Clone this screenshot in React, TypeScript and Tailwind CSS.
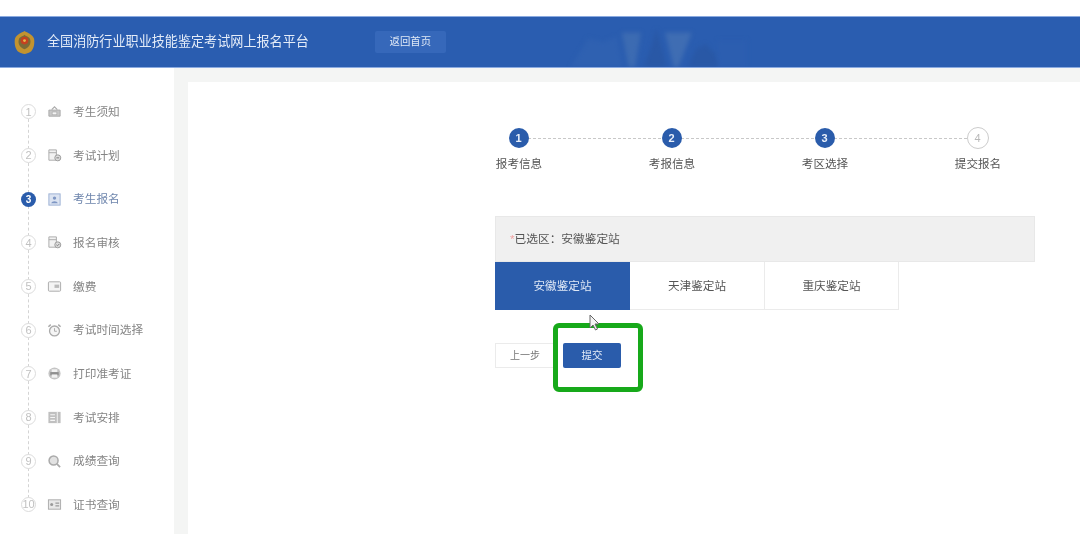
import React from "react";

const font = { fontFamily: '"Liberation Sans", "Noto Sans CJK SC", sans-serif' };

const icons: Record<string, React.ReactNode> = {
  notice: (
    <>
      <path d="M2 6.5h12v6.5H2z" fill="#c8c8c8" stroke="#aaa" />
      <path d="M5 6l3-3 3 3" fill="none" stroke="#aaa" strokeWidth="1.2" />
      <rect x="5.5" y="8.5" width="5" height="3" fill="#f4f4f4" stroke="#aaa" strokeWidth=".7" />
    </>
  ),
  plan: (
    <>
      <path d="M2 2h8v11H2z" fill="#f2f2f2" stroke="#aaa" />
      <path d="M2 5h8" stroke="#aaa" />
      <circle cx="11.5" cy="10.5" r="3.2" fill="#ddd" stroke="#999" />
      <path d="M10 10.5h3" stroke="#777" />
    </>
  ),
  apply: (
    <>
      <rect x="2" y="2" width="12" height="12" fill="#dbe3f1" stroke="#9db0d3" />
      <circle cx="8" cy="6.5" r="1.8" fill="#7f97c4" />
      <path d="M4.5 12c.5-3 6.5-3 7 0z" fill="#7f97c4" />
    </>
  ),
  audit: (
    <>
      <path d="M2 2h8v11H2z" fill="#f2f2f2" stroke="#aaa" />
      <path d="M2 5h8" stroke="#aaa" />
      <circle cx="11.5" cy="10.5" r="3.2" fill="#ddd" stroke="#999" />
      <path d="M10 10.5l1.2 1 2-2" fill="none" stroke="#777" />
    </>
  ),
  pay: (
    <>
      <rect x="1.5" y="3" width="13" height="10" rx="1" fill="#f4f4f4" stroke="#aaa" />
      <rect x="8" y="6" width="5" height="3.5" fill="#bbb" />
    </>
  ),
  clock: (
    <>
      <circle cx="8" cy="8.5" r="5.3" fill="#f5f5f5" stroke="#aaa" strokeWidth="1.4" />
      <path d="M8 5.5v3.3h2.5" fill="none" stroke="#aaa" />
      <path d="M1.5 4l2.5-2.3M14.5 4L12 1.7" stroke="#aaa" strokeWidth="1.6" />
    </>
  ),
  print: (
    <>
      <circle cx="8" cy="8" r="6.5" fill="#c4c4c4" />
      <rect x="5" y="3.5" width="6" height="3" fill="#f2f2f2" />
      <rect x="3.5" y="6.5" width="9" height="3.5" fill="#8f8f8f" />
      <rect x="5" y="9" width="6" height="3.5" fill="#f2f2f2" />
    </>
  ),
  arrange: (
    <>
      <rect x="1.5" y="2" width="13" height="12" fill="#c0c0c0" />
      <path d="M3.5 5h5M3.5 8h5M3.5 11h5" stroke="#f5f5f5" strokeWidth="1.2" />
      <path d="M11 2v12" stroke="#f5f5f5" />
    </>
  ),
  search: (
    <>
      <circle cx="7" cy="7" r="4.8" fill="#e2e2e2" stroke="#aaa" strokeWidth="1.6" />
      <path d="M10.5 10.5l3.5 3.5" stroke="#aaa" strokeWidth="1.8" />
    </>
  ),
  cert: (
    <>
      <rect x="1.5" y="3" width="13" height="10" fill="#e8e8e8" stroke="#aaa" />
      <circle cx="5" cy="8" r="1.6" fill="#999" />
      <path d="M9 6.5h4M9 9.5h4" stroke="#999" strokeWidth="1.2" />
    </>
  ),
};

const nav = [
  ["考生须知", "notice"],
  ["考试计划", "plan"],
  ["考生报名", "apply"],
  ["报名审核", "audit"],
  ["缴费", "pay"],
  ["考试时间选择", "clock"],
  ["打印准考证", "print"],
  ["考试安排", "arrange"],
  ["成绩查询", "search"],
  ["证书查询", "cert"],
];

function NavRow({ label, icon, index }: { label: string; icon: string; index: number }) {
  const active = index === 2;
  return (
    <div className="relative flex h-[43.67px] items-center pl-[21px]">
      {index < 9 && (
        <div className="absolute left-[28px] top-[29px] h-[30px] border-l border-dashed border-[#d4d4d4]" />
      )}
      <div
        className={
          active
            ? "relative flex h-[15px] w-[15px] items-center justify-center rounded-full bg-[#2a5cab] text-[10px] font-bold text-white"
            : "relative flex h-[15px] w-[15px] items-center justify-center rounded-full border border-[#dcdcdc] bg-white text-[11px] text-[#c0c0c0]"
        }
      >
        {index + 1}
      </div>
      <svg viewBox="0 0 16 16" className="ml-[11px] h-[15px] w-[15px] shrink-0">
        {icons[icon]}
      </svg>
      <span className={active ? "ml-[11px] text-[11.7px] text-[#6f86ad]" : "ml-[11px] text-[11.7px] text-[#858585]"}>
        {label}
      </span>
    </div>
  );
}

const steps = ["报考信息", "考报信息", "考区选择", "提交报名"];

function Step({ label, index }: { label: string; index: number }) {
  const done = index < 3;
  return (
    <div className="relative flex w-[153px] flex-col items-center">
      {index < 3 && (
        <div className="absolute left-[76px] top-[10px] w-[153px] border-t border-dashed border-[#c8c8c8]" />
      )}
      <div
        className={
          done
            ? "relative flex h-[20px] w-[20px] items-center justify-center rounded-full bg-[#2a5cab] text-[11px] font-semibold text-[#e8effa]"
            : "relative -my-[1px] flex h-[22px] w-[22px] items-center justify-center rounded-full border border-[#cccccc] bg-white text-[11px] text-[#b8b8b8]"
        }
      >
        {index + 1}
      </div>
      <div className="ml-[1px] mt-[7px] text-[11.6px] leading-[18px] text-[#555]">{label}</div>
    </div>
  );
}

export default function App() {
  return (
    <div className="h-[534px] w-[1080px] overflow-hidden bg-white blur-[0.35px]" style={font}>
      <div className="h-[16px] bg-white" />
      <header className="relative flex h-[52px] items-center overflow-hidden border-y border-y-[#8aaae0] bg-[#2a5db0] pl-[13px]">
        <svg viewBox="0 0 1080 52" className="absolute inset-0 h-full w-full blur-[2px]">
          <path d="M572 52l18-30 16 4 14-6 6 32z" fill="#2f61b1" />
          <path d="M625 16h20l-6 36h-7z" fill="#3c6bb2" />
          <path d="M648 52l8-22 5-18 5 18 6 22z" fill="#2958a6" />
          <path d="M670 16h28l-14 36h-5z" fill="#3f6db3" />
          <path d="M694 52l8-18 10-6 10 10 4 14z" fill="#2958a6" />
          <path d="M725 24h30v28h-30z" fill="#2c5eb0" />
        </svg>
        <svg viewBox="0 0 24 26" className="relative h-[25px] w-[23px] shrink-0">
          <path d="M12 1c3 2 8 3 10 8 1 6-1 12-4 14-2 1-4 2-6 2s-4-1-6-2C3 21 1 15 2 9c2-5 7-6 10-8z" fill="#c29330" />
          <path d="M12 5c2 2 5 2 6 5 1 4-1 8-6 10-5-2-7-6-6-10 1-3 4-3 6-5z" fill="#7a6a38" />
          <circle cx="12" cy="11" r="4" fill="#c5401f" />
          <circle cx="12" cy="11" r="1.5" fill="#e6b84a" />
        </svg>
        <div className="relative ml-[11px] text-[13.1px] text-[#e4ecf8]">全国消防行业职业技能鉴定考试网上报名平台</div>
        <button className="relative ml-[66px] flex h-[22px] w-[71px] items-center justify-center rounded-[2px] bg-[#3668ba] text-[10.4px] text-[#dfe8f6]">
          返回首页
        </button>
      </header>

      <div className="flex h-[466px] bg-[#f4f5f4]">
        <aside className="w-[174px] shrink-0 bg-white pt-[22px]">
          {nav.map(([label, icon], i) => (
            <NavRow key={label} label={label} icon={icon} index={i} />
          ))}
        </aside>
        <main className="ml-[14px] mt-[14px] flex-1 bg-white pt-[46px]">
          <div className="ml-[254px] flex">
            {steps.map((s, i) => (
              <Step key={s} label={s} index={i} />
            ))}
          </div>
          <div className="ml-[307px] mt-[43px] w-[540px]">
            <div className="flex h-[46px] items-center border border-[#e8e8e8] bg-[#f0f0f0] pl-[14px] text-[11.7px] text-[#555]">
              <span className="text-[#f0a0a0]">*</span>已选区：安徽鉴定站
            </div>
            <div className="flex h-[48px] text-[11.6px] text-[#555]">
              <div className="flex w-[135px] items-center justify-center bg-[#2a5cab] text-[#dfe8f6]">安徽鉴定站</div>
              <div className="flex w-[135px] items-center justify-center border-b border-r border-[#ebebeb]">天津鉴定站</div>
              <div className="flex w-[134px] items-center justify-center border-b border-r border-[#ebebeb]">重庆鉴定站</div>
            </div>
            <div className="relative mt-[33px] flex gap-[8px]">
              <button className="h-[25px] w-[60px] border border-[#ebebeb] bg-white text-[10px] text-[#777]">上一步</button>
              <button className="h-[25px] w-[58px] rounded-[2px] bg-[#2a5cab] text-[10.5px] text-[#e4ecf8]">提交</button>
              <div className="absolute left-[58px] top-[-20px] h-[69px] w-[90px] rounded-[6px] border-[5px] border-[#17a91a]" />
              <svg viewBox="0 0 12 18" className="absolute left-[94px] top-[-29px] h-[18px] w-[12px]">
                <path d="M1 1v13l3-3 2.500 5 2-1-2.500-5h4z" fill="#f4f4f4" stroke="#666" strokeWidth="1" />
              </svg>
            </div>
          </div>
        </main>
      </div>
    </div>
  );
}
